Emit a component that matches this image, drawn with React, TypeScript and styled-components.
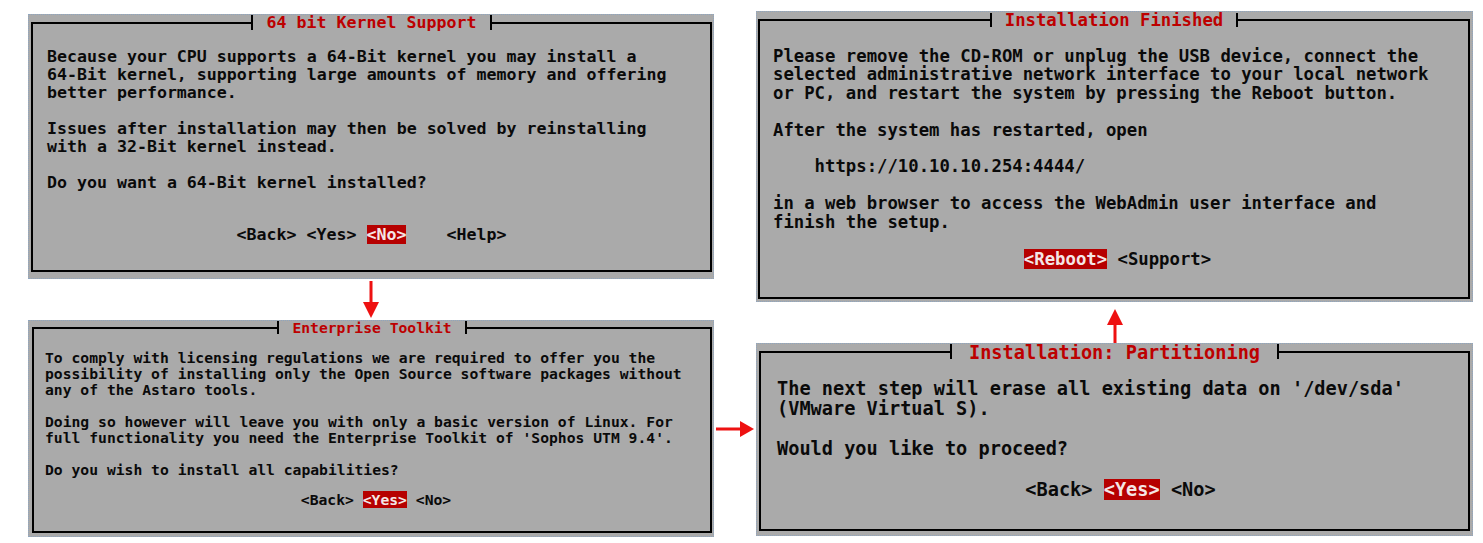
import React from "react";
import styled, { createGlobalStyle, css } from "styled-components";

const GlobalStyle = createGlobalStyle`
  html, body { margin: 0; padding: 0; background: #ffffff; }
  body { font-family: "DejaVu Sans Mono", "Liberation Mono", monospace; }
`;

const Page = styled.main`
  display: flex;
  align-items: flex-start;
  box-sizing: border-box;
  width: 1483px;
  height: 543px;
  padding: 11px 0 0 28px;
  overflow: hidden;
`;

const Column = styled.div<{ $w: number; $offset: number }>`
  display: flex;
  flex-direction: column;
  align-items: center;
  width: ${(p) => p.$w}px;
  margin-top: ${(p) => p.$offset}px;
`;

const Gutter = styled.div`
  width: 42px;
  display: flex;
  justify-content: center;
  padding-top: 410px;
`;

type Metrics = {
  w: number;
  h: number;
  pad: string;
  size: number;
  lh: number;
  legendH: number;
  legendLh: number;
  legendGap: number;
  bodyTop: number;
  bodyLeft: number;
  btnGap: number;
  btnNudge: number;
};

const Screen = styled.section<{ $m: Metrics }>`
  box-sizing: border-box;
  width: ${(p) => p.$m.w}px;
  height: ${(p) => p.$m.h}px;
  border: 1px dotted #8ea5bf;
  background: #aaaaaa;
  padding: ${(p) => p.$m.pad};
  display: flex;
  flex-direction: column;
  overflow: hidden;
  font-size: ${(p) => p.$m.size}px;
  line-height: ${(p) => p.$m.lh}px;
  font-weight: 700;
  color: #0a0a0a;
`;

const Frame = styled.fieldset<{ $m: Metrics }>`
  flex: 1;
  margin: 0;
  min-inline-size: 0;
  border: 2px solid #000;
  padding: ${(p) => p.$m.bodyTop}px 0 0 0;
`;

const Title = styled.legend<{ $m: Metrics }>`
  margin: 0 auto;
  padding: 0 ${(p) => p.$m.legendGap}px;
  height: ${(p) => p.$m.legendH}px;
  line-height: ${(p) => p.$m.legendLh}px;
  border-left: 2px solid #000;
  border-right: 2px solid #000;
  color: #bd0000;
  white-space: pre;
`;

const Body = styled.div<{ $m: Metrics }>`
  padding-left: ${(p) => p.$m.bodyLeft}px;
  white-space: pre;
`;

const Buttons = styled.div<{ $m: Metrics }>`
  margin-top: ${(p) => p.$m.btnGap}px;
  padding-left: ${(p) => p.$m.btnNudge}px;
  text-align: center;
  white-space: pre;
`;

const Key = styled.span<{ $active?: boolean }>`
  ${(p) =>
    p.$active &&
    css`
      background: #b60000;
      color: #f4e6e6;
    `}
`;

const ArrowBox = styled.div<{ $h: number }>`
  height: ${(p) => p.$h}px;
  display: flex;
  justify-content: center;
`;

const RED = "#ee1111";

function DownArrow() {
  return (
    <ArrowBox $h={41}>
      <svg width="16" height="41" viewBox="0 0 16 41">
        <rect x="6.5" y="2" width="3" height="22" fill={RED} />
        <polygon points="0,23 16,23 8,39" fill={RED} />
      </svg>
    </ArrowBox>
  );
}

function UpArrow() {
  return (
    <ArrowBox $h={41}>
      <svg width="16" height="41" viewBox="0 0 16 41">
        <polygon points="8,7 16,23 0,23" fill={RED} />
        <rect x="6.5" y="22" width="3" height="19" fill={RED} />
      </svg>
    </ArrowBox>
  );
}

function RightArrow() {
  return (
    <svg width="38" height="16" viewBox="0 0 38 16">
      <rect x="0" y="6.5" width="26" height="3" fill={RED} />
      <polygon points="24,0 38,8 24,16" fill={RED} />
    </svg>
  );
}

type Btn = { label: string; active?: boolean; lead?: string };

function Dialog({ m, title, text, buttons }: { m: Metrics; title: string; text: string; buttons: Btn[] }) {
  return (
    <Screen $m={m}>
      <Frame $m={m}>
        <Title $m={m}>{title}</Title>
        <Body $m={m}>{text}</Body>
        <Buttons $m={m}>
          {buttons.map((b, i) => (
            <React.Fragment key={b.label}>
              {i > 0 ? b.lead ?? " " : ""}
              <Key $active={b.active}>{`<${b.label}>`}</Key>
            </React.Fragment>
          ))}
        </Buttons>
      </Frame>
    </Screen>
  );
}

const m1: Metrics = { w: 686, h: 265, pad: "0 1px 6px 2px", size: 16.6, lh: 18, legendH: 15, legendLh: 15, legendGap: 14, bodyTop: 18, bodyLeft: 14, btnGap: 34, btnNudge: 0 };
const m2: Metrics = { w: 686, h: 217, pad: "0 1px 3px 3px", size: 14.7, lh: 16, legendH: 13, legendLh: 13, legendGap: 13, bodyTop: 16, bodyLeft: 11, btnGap: 14, btnNudge: 8 };
const m3: Metrics = { w: 717, h: 291, pad: "1px 2px 2px 1px", size: 17.3, lh: 18.4, legendH: 14, legendLh: 14, legendGap: 13, bodyTop: 20, bodyLeft: 13, btnGap: 18.5, btnNudge: 7 };
const m4: Metrics = { w: 717, h: 193, pad: "0 2px 4px 2px", size: 18.6, lh: 20, legendH: 15, legendLh: 17, legendGap: 17, bodyTop: 20, bodyLeft: 16, btnGap: 21, btnNudge: 12 };

const t1 = [
  "Because your CPU supports a 64-Bit kernel you may install a",
  "64-Bit kernel, supporting large amounts of memory and offering",
  "better performance.",
  "",
  "Issues after installation may then be solved by reinstalling",
  "with a 32-Bit kernel instead.",
  "",
  "Do you want a 64-Bit kernel installed?",
].join("\n");

const t2 = [
  "To comply with licensing regulations we are required to offer you the",
  "possibility of installing only the Open Source software packages without",
  "any of the Astaro tools.",
  "",
  "Doing so however will leave you with only a basic version of Linux. For",
  "full functionality you need the Enterprise Toolkit of 'Sophos UTM 9.4'.",
  "",
  "Do you wish to install all capabilities?",
].join("\n");

const t3 = [
  "Please remove the CD-ROM or unplug the USB device, connect the",
  "selected administrative network interface to your local network",
  "or PC, and restart the system by pressing the Reboot button.",
  "",
  "After the system has restarted, open",
  "",
  "    https://10.10.10.254:4444/",
  "",
  "in a web browser to access the WebAdmin user interface and",
  "finish the setup.",
].join("\n");

const t4 = [
  "The next step will erase all existing data on '/dev/sda'",
  "(VMware Virtual S).",
  "",
  "Would you like to proceed?",
].join("\n");

export default function App() {
  return (
    <>
      <GlobalStyle />
      <Page>
        <Column $w={686} $offset={3}>
          <Dialog
            m={m1}
            title="64 bit Kernel Support"
            text={t1}
            buttons={[
              { label: "Back" },
              { label: "Yes" },
              { label: "No", active: true },
              { label: "Help", lead: "    " },
            ]}
          />
          <DownArrow />
          <Dialog
            m={m2}
            title="Enterprise Toolkit"
            text={t2}
            buttons={[{ label: "Back" }, { label: "Yes", active: true }, { label: "No" }]}
          />
        </Column>
        <Gutter>
          <RightArrow />
        </Gutter>
        <Column $w={717} $offset={0}>
          <Dialog
            m={m3}
            title="Installation Finished"
            text={t3}
            buttons={[{ label: "Reboot", active: true }, { label: "Support" }]}
          />
          <UpArrow />
          <Dialog
            m={m4}
            title="Installation: Partitioning"
            text={t4}
            buttons={[{ label: "Back" }, { label: "Yes", active: true }, { label: "No" }]}
          />
        </Column>
      </Page>
    </>
  );
}
